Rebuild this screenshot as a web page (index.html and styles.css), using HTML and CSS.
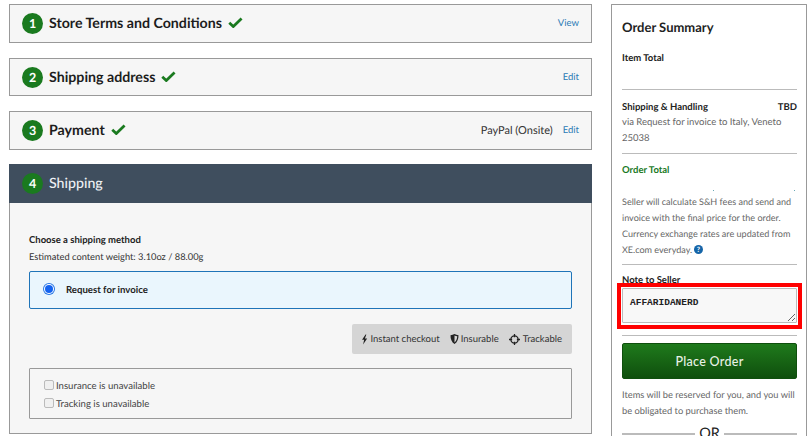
FILE: index.html
```html
<!DOCTYPE html>
<html lang="en">
<head>
<meta charset="utf-8">
<title>Checkout</title>
<link rel="stylesheet" href="styles.css">
</head>
<body>
<div class="page">
  <main class="steps">
    <section class="step">
      <span class="num">1</span><h2 class="title">Store Terms and Conditions</h2>
      <svg class="check" viewBox="0 0 16 12"><path d="M1.2 6.2 5.6 10.4 14.6 1.6" /></svg>
      <a class="link push">View</a>
    </section>
    <section class="step step-short">
      <span class="num">2</span><h2 class="title">Shipping address</h2>
      <svg class="check" viewBox="0 0 16 12"><path d="M1.2 6.2 5.6 10.4 14.6 1.6" /></svg>
      <a class="link push">Edit</a>
    </section>
    <section class="step">
      <span class="num">3</span><h2 class="title">Payment</h2>
      <svg class="check" viewBox="0 0 16 12"><path d="M1.2 6.2 5.6 10.4 14.6 1.6" /></svg>
      <span class="method push">PayPal (Onsite)</span><a class="link">Edit</a>
    </section>
    <section class="open">
      <header class="step step-dark">
        <span class="num">4</span><h2 class="title">Shipping</h2>
      </header>
      <div class="body">
        <h3 class="choose">Choose a shipping method</h3>
        <p class="weight">Estimated content weight: 3.10oz / 88.00g</p>
        <label class="option">
          <span class="radio"></span>
          <span>Request for invoice</span>
        </label>
        <div class="tags-row">
          <div class="tags">
            <span class="tag">
              <svg class="tag-icon" viewBox="0 0 10 14"><path d="M6.5 0 1.5 7.5H4.5L3 14 8.8 5.5H5.6L7.6 0Z" /></svg>Instant checkout
            </span>
            <span class="tag">
              <svg class="tag-icon tag-shield" viewBox="0 0 12 14"><path fill-rule="evenodd" d="M6 0C7.5 1 9.5 1.6 11.6 1.7 11.7 7 10 11.300 6 14 2 11.300 .3 7 .4 1.700 2.500 1.600 4.500 1 6 0ZM6 2V11.800C8.500 9.800 9.700 7 9.800 3.300 8.500 3.100 7.200 2.700 6 2Z" /></svg>Insurable
            </span>
            <span class="tag">
              <svg class="tag-icon tag-target" viewBox="0 0 14 14"><circle cx="7" cy="7" r="4.600" fill="none" stroke="#222" stroke-width="1.600" /><path d="M7 0V4M7 10V14M0 7H4M10 7H14" fill="none" stroke="#222" stroke-width="1.600" /></svg>Trackable
            </span>
          </div>
        </div>
        <div class="extras">
          <label class="extra"><span class="box"></span>Insurance is unavailable</label>
          <label class="extra"><span class="box"></span>Tracking is unavailable</label>
        </div>
      </div>
    </section>
  </main>
  <aside class="summary">
    <h2 class="sum-title">Order Summary</h2>
    <div class="sum-label item">Item Total</div>
    <hr class="rule rule-a">
    <div class="sum-row"><span>Shipping &amp; Handling</span><span>TBD</span></div>
    <p class="muted via">via Request for invoice to Italy, Veneto 25038</p>
    <hr class="rule rule-b">
    <div class="sum-label total">Order Total</div>
    <div class="dots"><i></i><i></i></div>
    <p class="muted seller">Seller will calculate S&amp;H fees and send and<br>invoice with the final price for the order.<br>Currency exchange rates are updated from<br>XE.com everyday.
      <svg class="help" viewBox="0 0 10 10"><circle cx="5" cy="5" r="5" /><text x="5" y="8" text-anchor="middle">?</text></svg>
    </p>
    <hr class="rule rule-c">
    <div class="sum-label note">Note to Seller</div>
    <div class="note-wrap">
      <textarea class="note-input" readonly>AFFARIDANERD</textarea>
      <div class="highlight"></div>
    </div>
    <hr class="rule rule-d">
    <button class="place" type="button">Place Order</button>
    <p class="muted reserve">Items will be reserved for you, and you will<br>be obligated to purchase them.</p>
    <div class="or"><span>OR</span></div>
  </aside>
</div>
</body>
</html>
```
FILE: styles.css
```css
* { box-sizing: border-box; }
html, body { margin: 0; height: 100%; overflow: hidden; background: #fff; }
body { font-family: Lato, "Open Sans", sans-serif; color: #222; text-rendering: geometricPrecision; }
.page { display: flex; align-items: flex-start; padding: 4px 4px 0 9px; gap: 19px; width: 811px; height: 436px; overflow: hidden; }
.steps { width: 583px; flex: none; display: flex; flex-direction: column; gap: 15px; }
.step { display: flex; align-items: center; height: 39px; padding: 0 12px 0 12px; background: #f6f6f6; border: 1px solid #999; font-size: 10px; }
.step-short { height: 38px; }
.num { width: 21px; height: 21px; border-radius: 50%; background: #1a7a1f; color: #fff; font-size: 12.500px; font-weight: 700; display: flex; align-items: center; justify-content: center; flex: none; margin-right: 6px; }
.title { margin: 0; font-size: 14.200px; font-weight: 700; color: #1d1d1d; white-space: nowrap; }
.check { width: 15px; height: 11px; margin: -2px 0 0 6px; fill: none; stroke: #1a7a1f; stroke-width: 3; }
.push { margin-left: auto; }
.link { color: #2a7ab5; font-size: 9.500px; }
.method { font-size: 11px; color: #333; margin-right: 10px; }
.open { margin-top: -1px; border: 1px solid #999; border-top: 0; height: 270px; background: #f6f6f6; }
.step-dark { background: #3f4e5e; border: 0; height: 39px; margin: 0 -1px; padding-left: 13px; }
.step-dark .title { color: #eef1f4; font-weight: 500; }
.body { padding: 30px 19px 0 19px; }
.choose { margin: 0; font-size: 9.500px; font-weight: 700; line-height: 15px; color: #222; }
.weight { margin: 1px 0 0; font-size: 9.300px; line-height: 16px; color: #333; }
.option { display: flex; align-items: center; height: 38px; margin-top: 6px; padding-left: 15px; gap: 13px; background: #eaf6fd; border: 1px solid #1f74b8; border-radius: 2px; font-size: 9.600px; font-weight: 700; color: #222; }
.radio { width: 8px; height: 8px; border-radius: 50%; background: #1463f0; box-shadow: 0 0 0 1px #fff, 0 0 0 2px #2b78e4; margin-top: -2px; }
.tags-row { display: flex; justify-content: flex-end; margin-top: 15px; }
.tags { display: flex; align-items: center; gap: 10px; height: 30px; padding: 0 10px 0 9px; background: #d5d5d5; border-radius: 2px; font-size: 9.500px; color: #333; }
.tag { display: flex; align-items: center; gap: 2px; white-space: nowrap; }
.tag-icon { width: 7px; height: 11px; fill: #222; }
.tag-shield { width: 9px; height: 10px; }
.tag-target { width: 11px; height: 11px; margin-right: 1px; }
.extras { margin-top: 14px; height: 51px; padding: 8px 14px 0; border: 1px solid #999; border-radius: 1px; }
.extra { display: flex; align-items: center; height: 18px; font-size: 9.600px; color: #444; }
.box { width: 10px; height: 10px; margin: -2px 2px 0 0; border: 1px solid #bbb; border-radius: 2px; background: #f0f0f0; }
.summary { width: 196px; height: 460px; flex: none; padding: 13px 9px 0 10px; background: #fff; border: 1px solid #999; border-bottom: 0; border-radius: 1px; }
.sum-title { margin: 0; font-size: 13px; line-height: 18px; font-weight: 700; color: #222; }
.sum-label { font-size: 9.500px; font-weight: 700; line-height: 14px; }
.item { margin-top: 16px; }
.rule { border: 0; border-top: 1px solid #bbb; margin: 0; }
.rule-a { margin-top: 23px; }
.sum-row { display: flex; justify-content: space-between; margin-top: 11px; font-size: 9.500px; font-weight: 700; line-height: 14px; }
.muted { margin: 0; font-size: 9.500px; line-height: 16px; color: #666; }
.via { margin-top: 0; line-height: 16px; }
.rule-b { margin-top: 6px; }
.total { margin-top: 10px; color: #1a7a1f; }
.dots { display: flex; justify-content: space-between; height: 1px; margin: 12px 2px 0 91px; }
.dots i { width: 1px; height: 1px; background: #6aa9b5; }
.seller { margin-top: 3px; font-size: 9.050px; white-space: nowrap; }
.help { width: 9px; height: 9px; fill: #1565a8; vertical-align: -1px; }
.help text { fill: #fff; font-size: 8px; font-weight: 700; font-family: Lato, sans-serif; }
.rule-c { margin-top: 6px; }
.note { margin-top: 9px; }
.note-wrap { position: relative; margin-top: 0; height: 35px; }
.note-input { display: block; width: 100%; height: 35px; margin: 0; padding: 8px 7px 4px; background: #f8f8f8; border: 1px solid #bbb; border-radius: 1px; font-family: "Liberation Mono", monospace; font-size: 9.500px; font-weight: 700; color: #222; outline: 0; }
.highlight { position: absolute; inset: -5px -5px -6px -5px; border: 4px solid #f00; pointer-events: none; }
.rule-d { margin-top: 12px; }
.place { display: block; width: 100%; height: 36px; margin-top: 7px; padding: 0; background: linear-gradient(#1f7a1c, #0f4f0d); border: 1px solid #0f4f0d; border-radius: 2px; color: #e8f2e6; font-family: Lato, sans-serif; font-size: 12.500px; font-weight: 500; letter-spacing: .3px; }
.reserve { margin-top: 8px; font-size: 9.300px; white-space: nowrap; }
.or { display: flex; align-items: center; gap: 4px; margin-top: 6px; font-size: 14.500px; line-height: 18px; color: #222; }
.or::before, .or::after { content: ""; flex: 1; border-top: 2px solid #bbb; }
```
